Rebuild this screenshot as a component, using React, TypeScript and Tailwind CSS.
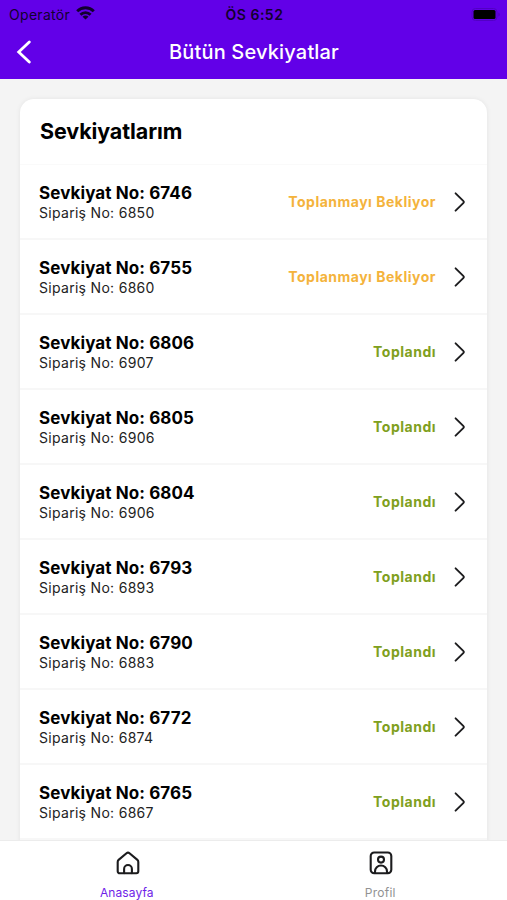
import clsx from 'clsx'

type Shipment = {
  no: number
  order: number
  done: boolean
}

const shipments: Shipment[] = [
  { no: 6746, order: 6850, done: false },
  { no: 6755, order: 6860, done: false },
  { no: 6806, order: 6907, done: true },
  { no: 6805, order: 6906, done: true },
  { no: 6804, order: 6906, done: true },
  { no: 6793, order: 6893, done: true },
  { no: 6790, order: 6883, done: true },
  { no: 6772, order: 6874, done: true },
  { no: 6765, order: 6867, done: true },
]

function StatusBar() {
  return (
    <div className="grid h-7 grid-cols-3 items-center pl-[9px] pr-[7px] text-[#12002f]">
      <div className="flex items-center gap-[6px]">
        <span className="text-[14px] tracking-[0.3px]">Operatör</span>
        <svg className="-mt-[2px]" width="19" height="14" viewBox="0 0 19 14" fill="none" stroke="currentColor" strokeWidth="2.900">
          <path d="M1.2 5.2a11.7 11.7 0 0 1 16.6 0" />
          <path d="M4.4 8.7a7.2 7.2 0 0 1 10.2 0" />
          <path d="M9.5 13.6 6.500 10.700a4.200 4.200 0 0 1 6 0z" fill="currentColor" stroke="none" />
        </svg>
      </div>
      <span className="text-center text-[14px] font-semibold tracking-[0.5px]">ÖS 6:52</span>
      <svg className="justify-self-end" width="29" height="13" viewBox="0 0 29 13">
        <rect x="1" y="0.500" width="25" height="12" rx="3.500" fill="none" stroke="#5200c4" />
        <rect x="2.500" y="2" width="22" height="9" rx="1.500" fill="#000" />
        <path d="M27.300 4.500v4c1-.4 1.500-1.100 1.500-2s-.5-1.600-1.500-2z" fill="#5200c4" />
      </svg>
    </div>
  )
}

function Header() {
  return (
    <header className="h-[79px] shrink-0 bg-[#6200e8]">
      <StatusBar />
      <div className="grid h-12 grid-cols-[60px_1fr_60px] items-center">
        <button aria-label="Geri" className="pl-4 text-white">
          <svg width="16" height="24" viewBox="0 0 16 24" fill="none" stroke="currentColor" strokeWidth="2.800" strokeLinecap="round" strokeLinejoin="miter">
            <path d="M13.300 1.900 2.700 12l10.600 10.100" />
          </svg>
        </button>
        <h1 className="pl-px text-center text-[20px] font-medium tracking-[0.17px] text-white">Bütün Sevkiyatlar</h1>
      </div>
    </header>
  )
}

function ShipmentRow({ no, order, done }: Shipment) {
  return (
    <li className="flex h-[75px] items-center border-b-2 border-[#f7f7f7] pl-[19px] pr-[21px]">
      <div className="flex-1 pt-[3px]">
        <p className="text-[17px] leading-5 font-bold tracking-[0.1px] text-black">Sevkiyat No: {no}</p>
        <p className="text-[14px] leading-5 tracking-[0.3px] text-[#222]">Sipariş No: {order}</p>
      </div>
      <span className={clsx('text-[14px] font-bold tracking-[0.5px]', done ? 'text-[#7fa01e]' : 'text-[#f4b33c]')}>
        {done ? 'Toplandı' : 'Toplanmayı Bekliyor'}
      </span>
      <svg className="ml-[18px]" width="12" height="20" viewBox="0 0 12 20" fill="none" stroke="#1c1c1e" strokeWidth="1.900" strokeLinecap="round" strokeLinejoin="round">
        <path d="M1.600 1.300 9.500 9.200a1.100 1.100 0 0 1 0 1.600L1.600 18.700" />
      </svg>
    </li>
  )
}

function TabBar() {
  return (
    <nav className="grid h-[60px] shrink-0 grid-cols-2 border-t border-[#ececec] bg-white text-[12px]">
      <a className="flex flex-col items-center pt-[10px] text-[#6f1ee8]">
        <svg className="ml-[2px]" width="24" height="24" viewBox="0 0 24 24" fill="none" stroke="#1c1c1e" strokeWidth="2.100" strokeLinecap="round" strokeLinejoin="round">
          <path d="M1.700 10.900c0-.8.3-1.500.9-2L10.500 2.200a2.300 2.300 0 0 1 3 0l7.900 6.700c.6.500.9 1.200.9 2v9.400a2 2 0 0 1-2 2H3.700a2 2 0 0 1-2-2z" />
          <path d="M8.100 22.100v-4.200a3.900 3.900 0 0 1 7.800 0v4.200" />
        </svg>
        <span className="mt-[10px] leading-4 tracking-[0.1px]">Anasayfa</span>
      </a>
      <a className="flex flex-col items-center pt-[10px] text-[#929292]">
        <svg className="ml-[2px]" width="24" height="24" viewBox="0 0 24 24" fill="none" stroke="#1c1c1e" strokeWidth="2.100" strokeLinecap="round" strokeLinejoin="round">
          <rect x="1.700" y="1.500" width="20.600" height="20.800" rx="3.500" />
          <circle cx="12" cy="8.600" r="3" />
          <path d="M6 22v-1.500a6 6 0 0 1 12 0V22" />
        </svg>
        <span className="mt-[10px] leading-4 tracking-[0.25px]">Profil</span>
      </a>
    </nav>
  )
}

export default function App() {
  return (
    <div className="flex h-screen flex-col overflow-hidden bg-[#f4f4f4] font-[Inter,'Liberation_Sans',sans-serif]">
      <Header />
      <main className="min-h-0 flex-1 overflow-hidden px-5 pt-5">
        <section className="rounded-[14px] bg-white pb-5 shadow-[0_0_5px_rgba(0,0,0,0.07)]">
          <h2 className="flex h-[66px] items-center border-b border-[#fafafa] pl-5 text-[21.500px] font-bold tracking-[-0.1px] text-black">
            Sevkiyatlarım
          </h2>
          <ul>
            {shipments.map((s) => (
              <ShipmentRow key={s.no} {...s} />
            ))}
          </ul>
        </section>
      </main>
      <TabBar />
    </div>
  )
}
